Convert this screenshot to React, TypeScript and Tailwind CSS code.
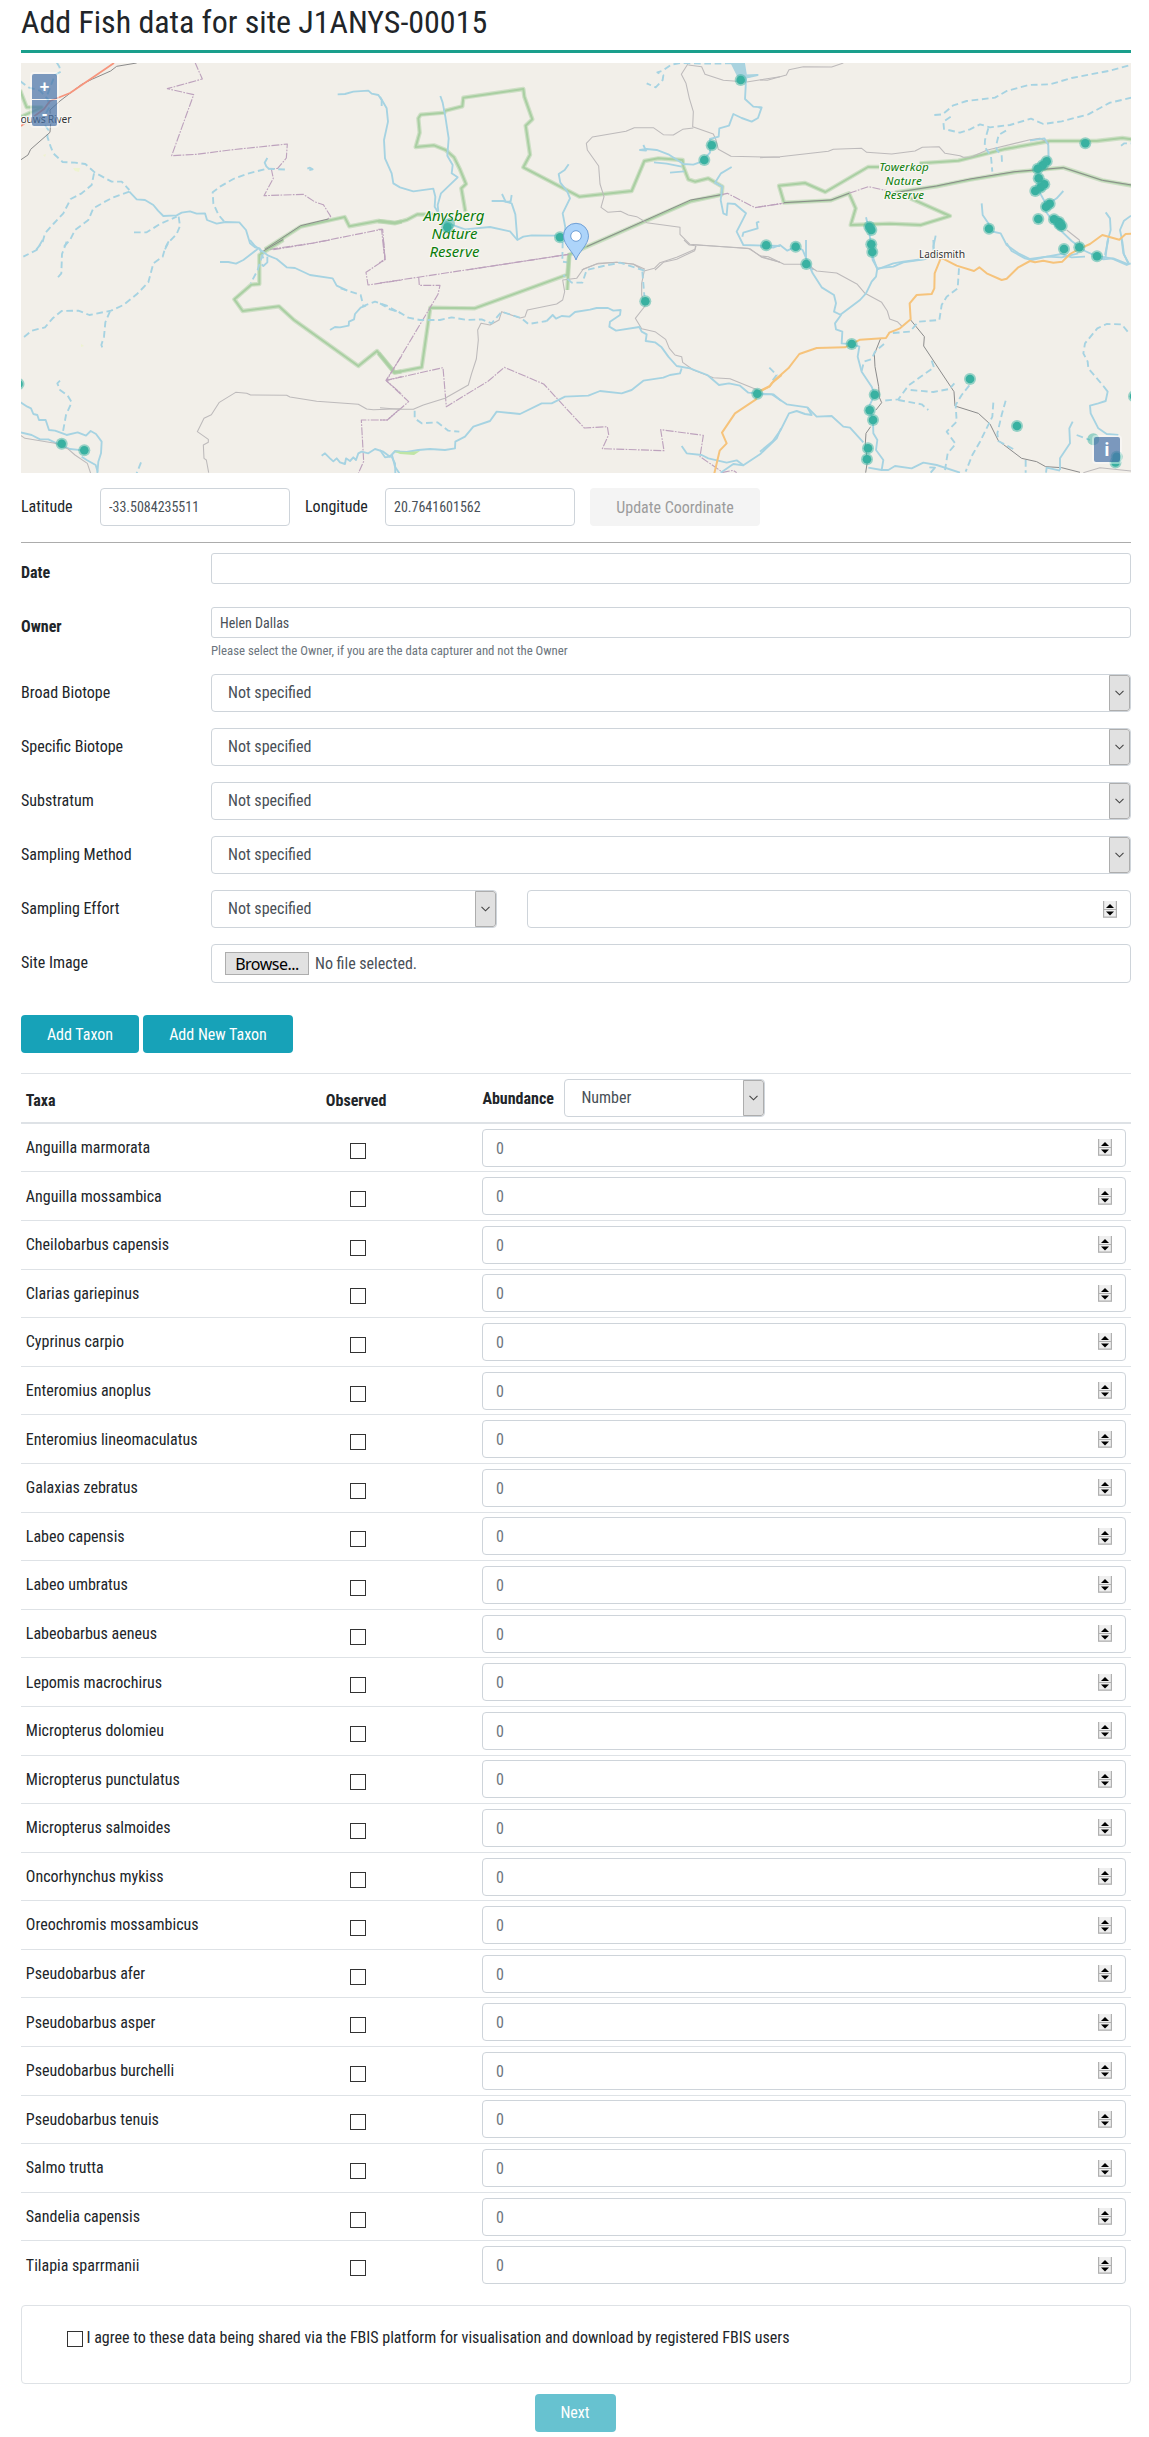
import React from 'react';

const SPECIES = [
  'Anguilla marmorata', 'Anguilla mossambica', 'Cheilobarbus capensis', 'Clarias gariepinus',
  'Cyprinus carpio', 'Enteromius anoplus', 'Enteromius lineomaculatus', 'Galaxias zebratus',
  'Labeo capensis', 'Labeo umbratus', 'Labeobarbus aeneus', 'Lepomis macrochirus',
  'Micropterus dolomieu', 'Micropterus punctulatus', 'Micropterus salmoides', 'Oncorhynchus mykiss',
  'Oreochromis mossambicus', 'Pseudobarbus afer', 'Pseudobarbus asper', 'Pseudobarbus burchelli',
  'Pseudobarbus tenuis', 'Salmo trutta', 'Sandelia capensis', 'Tilapia sparrmanii',
];

type Kind = 'water' | 'dash' | 'park' | 'border' | 'road' | 'orange' | 'rail';

const STYLES: Record<Kind, React.SVGProps<SVGPathElement>> = {
  park: { stroke: '#a9cfa2', strokeWidth: 6 },
  border: { stroke: '#bda2bd', strokeWidth: 3.4, strokeDasharray: '24 4 5 4' },
  road: { stroke: '#bdbabb', strokeWidth: 3.2 },
  rail: { stroke: '#8b8b8b', strokeWidth: 3 },
  water: { stroke: '#a6d3e2', strokeWidth: 5.6 },
  dash: { stroke: '#a6d3e2', strokeWidth: 5.6, strokeDasharray: '20 11' },
  orange: { stroke: '#f6c37b', strokeWidth: 6 },
};

type Tile = { x: number; y: number; lines: [Kind, string][] };

/* Each tile's geometry is held at three times the display scale. */
const TILES: Tile[] = [
  {
    x: 0, y: 0,
    lines: [
      ['park', 'M60 270 L80 322 L125 322 L60 352'],
      ['park', 'M795 748 L902 680 L1034 651 L1048 679 L1134 663 L1185 668 L1205 665'],
      ['rail', 'M795 748 L902 677 L985 657'],
      ['border', 'M585 187 L607 237 L502 266 L581 284 L515 467 L590 463 L690 450 L862 432 L859 474 L833 505 L814 507 L820 535 L792 587 L910 583 L945 606 L970 614 L992 649 L983 658'],
      ['border', 'M810 748 L940 729 L1145 688 L1152 760'],
      ['dash', 'M170 187 L178 200 L182 215 L165 225 L155 250 L140 290 L150 320 L125 360 L145 390 L142 410 L152 440 L160 460 L188 486 L225 488 L256 492 L285 518 L335 545 L365 545 L388 570'],
      ['dash', 'M60 243 L85 262 L120 272 L150 305'],
      ['dash', 'M282 520 L275 555 L245 580 L212 597 L190 640 L160 672 L135 700 L128 725 L108 750'],
      ['dash', 'M388 575 L340 592 L315 605 L280 625 L265 660 L225 690 L210 720 L190 742'],
      ['dash', 'M402 697 L440 697 L480 672 L530 650'],
      ['dash', 'M536 650 L540 678 L530 702 L505 728 L495 748'],
      ['dash', 'M672 664 L655 644 L640 610 L638 577 L660 560 L700 537 L740 522 L800 506 L865 509'],
      ['water', 'M802 474 L794 488 L799 499 L805 505'],
      ['water', 'M922 506 L930 503 L938 508 L928 510'],
      ['water', 'M388 575 L410 598 L435 600 L460 615 L474 632 L490 648 L530 646 L545 638 L570 634 L590 641 L615 640 L621 660 L650 671 L676 666 L718 667 L738 690 L750 730 L765 742 L779 745 L790 775'],
      ['water', 'M1013 283 L1035 282 L1060 275 L1105 272 L1115 281 L1135 285 L1145 300 L1145 318'],
      ['rail', 'M410 189 L350 199 L332 213 L278 237 L245 253 L180 303 L150 330 L152 370 L150 397 L92 448 L84 465 L60 481'],
    ],
  },
  {
    x: 380, y: 50,
    lines: [
      ['park', 'M-5 513 L44 520 L82 509 L112 493 L187 494'],
      ['park', 'M256 484 L244 415 L258 402 L239 356 L222 322 L197 300 L162 286 L107 291 L119 248 L115 205 L122 194 L193 188 L196 182 L247 169 L250 143 L430 117 L433 140 L457 208 L437 227 L450 314 L430 352 L598 440 L755 423 L793 333 L835 325 L908 330 L910 350 L925 388 L945 395 L985 385 L1027 410 L1025 434 L932 454 L620 590 L568 614 L562 720'],
      ['rail', 'M1025 434 L932 450 L620 590'],
      ['border', 'M-5 538 L8 538 L15 628 L0 638'],
      ['border', 'M260 660 L566 613'],
      ['border', 'M1025 434 L1042 430 L1125 473 L1205 460'],
      ['road', 'M925 40 L904 73 L918 100 L928 145 L940 185 L938 230 L1000 252 L1008 270 L1015 298 L1053 319 L1200 322'],
      ['road', 'M940 234 L908 238 L880 255 L850 254 L820 233 L763 233 L738 244 L637 261 L619 280 L622 300 L656 348 L660 402 L672 440 L663 472 L684 487 L722 484 L745 495 L770 500 L800 518 L900 532 L900 553 L930 583 L1000 588 L1110 596 L1145 622 L1200 637'],
      ['road', 'M925 45 L965 50 L975 73 L1030 91 L1100 96 L1200 80'],
      ['road', 'M948 588 L944 602 L890 628 L850 637 L825 660'],
      ['road', 'M605 660 L650 642 L710 637 L760 642 L795 658'],
      ['dash', 'M1055 40 L990 41 L900 39 L874 44 L848 62 L832 67 L850 76 L848 90 L827 112 L800 100'],
      ['water', 'M1052 39 L1092 39 L1098 76 L1133 75 L1098 83 L1097 110 L1095 147 L1120 170 L1145 172 L1134 204 L1115 215 L1085 204 L1060 192 L1047 227 L1018 235 L1016 260 L990 267 L990 308 L965 335 L940 344 L910 342 L865 313 L830 300 L800 297 L780 300 L798 302 L790 285'],
      ['water', 'M822 337 L860 341 L905 350'],
      ['water', 'M870 368 L913 364'],
      ['water', 'M1055 351 L1023 370 L1005 398 L1027 410 L1022 450 L1030 490 L1040 495 L1043 460 L1065 462 L1098 490 L1070 545 L1090 585 L1200 588'],
      ['water', 'M1138 515 L1130 518 L1133 535 L1090 548 L1087 560'],
      ['water', 'M0 140 L20 175 L24 215 L12 270 L15 325 L35 370 L40 400 L60 412 L100 424 L160 416 L166 440 L164 470 L185 505 L205 520 L255 538 L330 531 L390 544 L412 570 L430 560 L455 556 L530 557'],
      ['water', 'M181 138 L188 158 L196 200 L206 265 L202 317 L218 345 L215 370 L233 382 L183 430 L173 465 L175 485'],
      ['water', 'M335 453 L370 453 L395 460 L406 493 L412 568'],
      ['water', 'M366 432 L377 455 L392 454 L395 435'],
      ['water', 'M566 343 L554 360 L536 372 L541 398 L562 425 L570 445 L548 490 L556 532 L552 560'],
      ['dash', 'M548 575 L547 635 L568 638'],
    ],
  },
  {
    x: 760, y: 50,
    lines: [
      ['park', 'M357 351 L324 351 L196 426 L135 399 L57 407 L72 458 L213 451 L267 430 L287 475 L272 525 L390 521 L482 525 L570 498 L447 443'],
      ['park', 'M479 340 L595 332 L735 297 L870 273 L1010 273 L1087 264 L1115 268'],
      ['park', 'M405 427 L530 409 L630 389 L765 366 L910 353 L1027 391 L1115 407'],
      ['rail', 'M72 458 L213 450 L267 430'],
      ['rail', 'M410 427 L530 408 L630 387 L765 365 L910 353 L1027 391 L1115 405'],
      ['border', 'M-5 471 L72 460'],
      ['border', 'M267 430 L325 410 L405 427'],
      ['road', 'M0 90 L22 91 L79 75 L87 59 L130 50 L215 51 L250 39'],
      ['road', 'M0 323 L60 320 L205 304 L220 298 L305 295 L320 307 L395 312 L465 303 L487 292 L537 290 L555 310 L600 317 L610 322 L634 321 L680 301 L810 269 L840 265 L865 278 L865 320'],
      ['road', 'M920 540 L958 570 L960 585'],
      ['dash', 'M523 195 L548 193 L580 166 L620 153 L705 143 L740 123 L805 105 L870 103 L935 84 L1050 62 L1112 45'],
      ['dash', 'M572 200 L550 215 L552 237 L600 248 L630 238 L660 223 L690 232 L750 225 L813 206 L850 222 L905 214 L985 193 L1050 158 L1115 143'],
      ['dash', 'M685 235 L675 270 L674 290 L693 320 L697 365'],
      ['dash', 'M738 242 L716 255 L710 280 L710 300 L725 315 L726 338'],
      ['water', 'M810 272 L853 265 L865 285 L866 325 L835 350 L835 420 L857 460 L858 485 L890 530 L935 573 L975 603 L1030 628 L1060 625 L1105 643'],
      ['water', 'M910 423 L890 445 L875 455'],
      ['water', 'M318 502 L325 530 L334 590 L340 625 L352 658'],
      ['water', 'M665 460 L668 495 L685 520 L690 543 L722 550 L740 585 L775 610 L810 627 L860 620 L905 612 L935 622 L975 620'],
      ['water', 'M1037 487 L1050 505 L1052 540 L1042 575 L1037 620 L1030 628'],
      ['water', 'M1113 497 L1092 512 L1080 540 L1087 575 L1092 613 L1105 640'],
      ['water', 'M527 557 L520 590 L523 618 L492 627 L430 635 L400 640 L352 658'],
      ['water', 'M0 590 L40 593 L60 585 L82 602 L107 590 L128 600 L145 640 L160 660'],
      ['water', 'M-4 173 L4 173'],
      ['dash', 'M1083 287 L1093 280 L1113 280'],
    ],
  },
  {
    x: 0, y: 240,
    lines: [
      ['park', 'M850 0 L778 45 L778 132 L754 134 L703 178 L728 213 L837 199 L882 240 L1075 378 L1131 333 L1184 397 L1204 395'],
      ['rail', 'M850 -2 L790 33'],
      ['border', 'M820 29 L925 12 L990 0'],
      ['border', 'M1150 0 L1155 59 L1098 97 L1104 135 L1205 120'],
      ['border', 'M1205 348 L1158 421 L1205 462'],
      ['border', 'M1158 421 L1205 410'],
      ['border', 'M1198 508 L1162 540 L1084 540 L1091 664 L1075 700'],
      ['road', 'M1200 506 L1120 509 L1100 507 L1075 493 L950 484 L870 471 L860 466 L752 465 L740 460 L707 457 L658 487 L634 524 L612 535 L592 575 L625 598 L625 607 L610 615 L612 655 L619 660 L626 698'],
      ['dash', 'M128 0 L110 30 L70 50'],
      ['dash', 'M200 5 L186 42 L184 100 L168 119'],
      ['dash', 'M506 4 L495 25 L488 50 L460 70 L445 127 L410 163 L370 195 L333 212 L268 225 L235 212 L185 213 L158 235 L135 262 L95 272 L67 295'],
      ['dash', 'M330 214 L316 247 L312 290 L304 315 L308 325'],
      ['dash', 'M180 422 L172 430 L180 450 L203 467 L215 487 L198 525 L188 580'],
      ['dash', 'M423 667 L410 700'],
      ['dash', 'M788 42 L773 90 L752 130'],
      ['dash', 'M1022 145 L1082 165 L1090 198 L1125 185 L1160 197 L1200 220'],
      ['water', 'M750 0 L765 18 L785 32 L805 47 L830 57 L860 82 L885 84 L930 105 L998 115 L1010 137 L1042 152'],
      ['water', 'M660 66 L685 66 L708 71 L730 60 L773 27'],
      ['water', 'M802 50 L802 67 L790 78 L785 73'],
      ['water', 'M1098 197 L1082 203 L1065 222 L1062 238 L1047 245 L1046 257 L1020 262 L1005 261 L990 270'],
      ['water', 'M60 486 L82 500 L93 505 L100 522 L112 525 L117 540 L137 540 L147 570 L165 572 L200 585 L233 577 L258 587 L272 573 L288 582 L305 605 L303 640 L295 665 L292 700'],
      ['water', 'M60 577 L95 585 L120 598 L145 598 L170 610 L210 627 L250 631'],
      ['water', 'M245 650 L260 660 L287 675 L293 695'],
      ['road', 'M60 585 L75 595 L165 610 L203 626 L225 645 L262 670 L272 700'],
      ['water', 'M965 647 L975 640 L990 655 L1000 664 L1010 655 L1020 667 L1035 672 L1038 655 L1050 663 L1060 652 L1068 660 L1075 640 L1085 635 L1105 640 L1125 627 L1150 635 L1170 650 L1185 633 L1200 635'],
      ['water', 'M1175 650 L1185 670 L1186 700'],
    ],
  },
  {
    x: 380, y: 240,
    lines: [
      ['park', 'M568 40 L562 104 L284 205 L151 203 L125 382 L43 398 L-4 340'],
      ['border', 'M0 129 L566 43'],
      ['border', 'M116 111 L118 136 L180 136 L174 163 L20 421 L189 383 L199 500 L325 423 L373 382 L491 432 L613 564 L682 560 L686 584 L667 626 L852 632 L842 569 L970 586 L960 650 L1028 697 L1060 691 L1070 698'],
      ['border', 'M18 421 L86 485 L22 540 L0 540'],
      ['border', 'M10 0 L15 58 L-2 68'],
      ['road', 'M0 503 L55 508 L100 508 L130 495 L195 475 L265 435 L275 400 L289 357 L295 300 L293 270 L303 250 L330 255 L357 240 L365 215 L420 234 L435 230 L442 210 L530 192 L548 180 L554 155 L548 120 L590 115 L610 87 L655 70 L710 67 L760 73 L793 92 L785 130 L785 165 L795 198 L766 235 L785 266 L825 275 L857 298 L868 325 L885 345 L905 350 L908 367 L940 390 L1000 413 L1050 416 L1133 450'],
      ['road', 'M912 0 L928 15 L947 17 L945 28 L890 52 L840 68 L823 85 L795 92'],
      ['road', 'M947 15 L1105 25 L1145 50 L1200 67'],
      ['dash', 'M0 190 L30 208 L55 215 L85 233 L120 240 L180 240 L215 232 L260 240 L305 238 L335 250 L365 215 L425 235 L445 252 L500 243'],
      ['dash', 'M793 92 L720 68 L670 78 L620 90 L607 128 L575 128 L550 105'],
      ['dash', 'M787 95 L790 130 L793 168'],
      ['dash', 'M104 512 L104 535 L125 550 L172 547 L205 572 L238 575'],
      ['dash', 'M1168 383 L1180 395 L1190 405 L1175 425'],
      ['water', 'M500 243 L518 225 L528 236 L545 228 L568 230 L585 216 L630 209 L650 204 L684 204 L700 212 L722 210 L720 225 L690 245 L688 260 L708 272 L778 261 L785 275 L800 283 L797 303 L825 307 L845 322 L865 350 L890 378 L930 385 L982 405 L1017 435 L1047 430 L1080 437 L1105 458 L1180 463 L1203 482'],
      ['water', 'M905 385 L900 400 L870 405 L850 413 L790 422 L755 450 L725 460 L660 453 L625 467 L555 470 L515 490 L485 490 L420 522 L350 515 L330 543 L280 560 L255 590 L226 605 L225 625 L195 630 L150 627 L115 630 L80 636 L45 634 L30 650 L15 652 L0 630'],
      ['water', 'M36 645 L45 680 L58 700'],
      ['water', 'M1203 565 L1190 595 L1140 643 L1090 676 L1070 661 L1040 668 L985 655 L965 645 L920 640 L905 618'],
      ['water', 'M1090 676 L1060 672 L1022 698'],
      ['orange', 'M1205 405 L1175 430 L1168 440 L1133 458 L1128 478 L1065 520 L1026 578 L1040 610 L1019 632 L1003 700'],
    ],
  },
  {
    x: 760, y: 240,
    lines: [
      ['road', 'M0 48 L25 50 L72 73 L140 73 L170 93 L230 99 L292 133 L315 160 L365 187 L382 213 L389 237 L412 245 L427 260'],
      ['rail', 'M452 240 L493 290 L491 318 L582 455 L585 498 L655 520 L690 552 L715 602 L785 655 L830 665 L857 680 L905 683 L960 697'],
      ['rail', 'M362 295 L343 343 L345 380 L356 440 L358 472 L365 488 L348 510'],
      ['rail', 'M332 560 L318 580 L316 610 L322 665 L317 698'],
      ['road', 'M970 698 L1020 683 L1113 693'],
      ['dash', 'M597 85 L593 145 L560 170 L545 195 L538 240 L475 245 L450 275 L385 280'],
      ['dash', 'M372 312 L345 335 L335 357 L312 365 L305 392'],
      ['dash', 'M515 362 L522 382 L485 408 L445 437 L415 478 L370 482'],
      ['dash', 'M452 450 L520 456 L568 447 L583 430'],
      ['dash', 'M415 480 L485 493 L505 510'],
      ['dash', 'M628 436 L605 465 L587 495 L590 545 L560 575 L587 612 L563 640 L555 690'],
      ['dash', 'M700 488 L697 530 L660 605 L637 645 L617 695'],
      ['dash', 'M737 482 L725 525 L712 580 L715 603 L765 630'],
      ['dash', 'M1103 275 L1085 253 L1040 252 L1012 265 L975 310 L970 340 L983 365 L985 385 L1030 438'],
      ['dash', 'M950 585 L990 600'],
      ['dash', 'M797 660 L797 698'],
      ['water', 'M1030 438 L1043 455 L1037 483 L1015 490 L990 497 L992 520 L1015 565 L1040 582 L1075 585'],
      ['water', 'M138 0 L138 55 L158 100 L185 142 L222 165 L228 190 L222 215 L243 225 L225 250 L228 268 L247 275 L245 310 L275 312 L298 320 L293 350 L305 395 L335 440 L344 464 L327 500 L339 540 L340 580 L352 600 L348 630 L370 660 L365 690 L325 683'],
      ['water', 'M334 30 L338 60 L352 85 L348 110 L335 125 L318 160 L300 180 L240 225'],
      ['water', 'M352 85 L400 80 L430 67 L492 58 L522 40 L520 0'],
      ['water', 'M365 690 L385 690 L405 678 L455 685 L490 668 L530 675 L600 698'],
      ['water', 'M508 682 L525 683 L512 698'],
      ['water', 'M0 463 L35 463 L80 493 L142 502 L155 525 L135 522 L110 513 L87 520 L62 570 L38 604 L0 635'],
      ['water', 'M142 502 L170 530 L215 528 L250 560 L270 563 L310 607'],
      ['water', 'M938 545 L928 565 L930 610 L900 655 L900 690'],
      ['water', 'M740 10 L755 33 L795 55 L815 60 L860 50 L905 52 L955 40'],
      ['water', 'M1010 48 L1055 55 L1100 75 L1112 70'],
      ['water', 'M1045 0 L1035 45'],
      ['water', 'M1085 0 L1090 40 L1107 72'],
      ['water', 'M858 698 L860 683 L900 692'],
      ['orange', 'M-5 455 L30 438 L42 422 L85 385 L118 342 L170 324 L255 322 L300 299 L378 294 L388 278 L420 265 L452 238 L449 190 L470 165 L515 162 L523 145 L524 100 L543 53 L590 77 L642 93 L658 82 L680 100 L725 120 L740 116 L775 82 L810 63 L825 67 L850 62 L880 68 L907 65 L930 42 L955 28 L990 12 L1027 -15 L1078 -1 L1097 -18 L1115 -19'],
    ],
  },
];

const SITES: [number, number][] = [
  [740.7, 80], [711.7, 145.3], [704.3, 160], [447.3, 227.3], [560, 237.3], [766.2, 245.3],
  [795.7, 246.7], [806.3, 264], [1085.3, 143.3], [1046.7, 161.3], [1042.7, 165.3], [1037.7, 168.7],
  [1038.7, 178.3], [1044.3, 184.3], [1040.5, 187.5], [1035.3, 191], [1049.7, 203.7], [1046, 206.7],
  [1038.3, 219], [1054, 219.3], [1059, 222], [1059.5, 224.3], [1061.7, 226], [989, 228.7],
  [869.3, 226.7], [871.3, 230], [871.3, 244.3], [872.3, 252], [1064, 249], [1079.3, 247.3],
  [1097, 256.3], [61.7, 443.7], [84.3, 450.3], [18.5, 384], [645.3, 301.3], [757.3, 393.7],
  [851.7, 344], [874.7, 394.7], [869.7, 410.3], [873, 420], [868, 448.3], [867, 459.3],
  [970, 379], [1017, 426], [1134, 396.3], [1115.5, 462.5], [1116.7, 456.7],
];

function MapLabel({ x, y, size, color, width, italic, children }: {
  x: number; y: number; size: number; color: string; width: number; italic?: boolean; children: string;
}) {
  return (
    <text
      x={x} y={y} textAnchor="middle" fontSize={size} fill={color} textLength={width}
      fontStyle={italic ? 'italic' : 'normal'} fontFamily="Noto Sans, sans-serif"
      stroke="#f8f6f2" strokeWidth={2.4} strokeLinejoin="round" paintOrder="stroke"
    >
      {children}
    </text>
  );
}

function SiteMap() {
  return (
    <div className="relative h-[410px] overflow-hidden bg-[#f2efe9]">
      <svg viewBox="21 63 1110 410" className="block h-full w-full" fill="none" strokeLinejoin="round">
        {TILES.map((t, i) => (
          <g key={i} transform={`translate(${t.x} ${t.y}) scale(0.333333)`}>
            {t.lines.map(([kind, d], j) => (
              <g key={j}>
                {kind === 'park' && <path d={d} stroke="#a9cfa2" strokeOpacity={0.5} strokeWidth={13} />}
                <path d={d} {...STYLES[kind]} />
              </g>
            ))}
          </g>
        ))}
        <path d="M730.5 63 H744 L746 75 L757 75 L748 78 L738 78 Z" fill="#aad3df" />
        <path d="M114 63 L70 93 L60 97 L50 101 L44 109 L21 126" stroke="#f6957d" strokeWidth={1.8} />
        <path d="M394 451.5 L408 452 L420 451 L414 455 L400 454 Z" fill="#bfe5a5" />
        <path d="M43 155 l3 -1 l-1 3z M73 168 l7 0 l-1 4 l-4 -1z M81 344 l3 2 l-3 1z" fill="#eef3d0" />
        <MapLabel x={46} y={123} size={10.5} color="#333" width={51}>ouws River</MapLabel>
        <MapLabel x={454} y={221} size={15} color="#0a7d0a" width={61} italic>Anysberg</MapLabel>
        <MapLabel x={454.5} y={239} size={15} color="#0a7d0a" width={46} italic>Nature</MapLabel>
        <MapLabel x={454.5} y={257} size={15} color="#0a7d0a" width={50} italic>Reserve</MapLabel>
        <MapLabel x={904} y={171} size={11.6} color="#0a7d0a" width={49.5} italic>Towerkop</MapLabel>
        <MapLabel x={903.5} y={185} size={11.6} color="#0a7d0a" width={36.5} italic>Nature</MapLabel>
        <MapLabel x={904} y={199.3} size={11.6} color="#0a7d0a" width={40} italic>Reserve</MapLabel>
        <MapLabel x={942} y={257.5} size={10.3} color="#333" width={46}>Ladismith</MapLabel>
        <circle cx={449.5} cy={223.5} r={5.5} fill="#3bb3a3" fillOpacity={0.5} />
        <circle cx={1093.3} cy={439.2} r={6} fill="#3bb3a3" fillOpacity={0.5} />
        {SITES.map(([x, y], i) => (
          <g key={i}>
            <circle cx={x} cy={y} r={6} fill="#3bb3a3" fillOpacity={0.5} />
            <circle cx={x} cy={y} r={4.3} fill="#39b1a1" />
          </g>
        ))}
        <path
          d="M576 260 C573.5 252 563.5 245 563.5 235.8 A12.5 12.5 0 0 1 588.5 235.8 C588.5 245 578.5 252 576 260 Z"
          fill="#add4fa" stroke="#6f9fd6" strokeWidth={1}
        />
        <circle cx={576} cy={236} r={5.3} fill="#fff" stroke="#6f9fd6" strokeWidth={1} />
      </svg>
      <div className="absolute left-[9px] top-[9px] flex flex-col gap-px rounded bg-white/40 p-[2px] font-['Liberation_Sans',sans-serif] text-[16px] leading-none font-bold text-white">
        <button className="h-[25px] w-[25px] rounded-t-[2px] bg-[#003c88]/50 text-[17px]">+</button>
        <button className="h-[26px] w-[25px] rounded-b-[2px] bg-[#003c88]/50 text-[17px]">-</button>
      </div>
      <div className="absolute right-[9px] bottom-[9px] rounded bg-white/40 p-[2px]">
        <button className="block h-[25px] w-[26px] rounded-[2px] bg-[#003c88]/50 text-[19px] leading-none font-bold text-white">i</button>
      </div>
    </div>
  );
}

function SelectBox({ value, className = '' }: { value: string; className?: string }) {
  return (
    <div className={`flex h-[38px] overflow-hidden rounded border border-[#ced4da] text-[#495057] ${className}`}>
      <span className="flex-1 pl-4 leading-[36px]">{value}</span>
      <span className="flex w-[21px] items-center justify-center rounded-r-[3px] border border-[#adadad] bg-[#e1e1e1]">
        <svg width="9" height="6" viewBox="0 0 9 6" fill="none" stroke="#444" strokeWidth="1.1">
          <path d="M0.5 0.8 L4.5 4.8 L8.5 0.8" />
        </svg>
      </span>
    </div>
  );
}

function Spinner() {
  return (
    <svg width="14" height="17" viewBox="0 0 14 17" className="shrink-0">
      <rect width="14" height="17" fill="#efefef" />
      <path d="M0.6 0 V16.3 M13.4 0 V16.3 M0 8.5 H14 M0 16.2 H14" stroke="#b0b0b0" strokeWidth="1.2" fill="none" />
      <path d="M3 7 L7 3 L11 7 Z M3 10.5 L7 14.5 L11 10.5 Z" fill="#000" />
    </svg>
  );
}

function NumberBox({ placeholder = '', className = '' }: { placeholder?: string; className?: string }) {
  return (
    <div className={`flex h-[38px] items-center rounded border border-[#ced4da] pr-[13px] pl-[12.5px] ${className}`}>
      <input className="h-full min-w-0 flex-1 bg-transparent pt-px outline-none placeholder:text-[#6c757d]" placeholder={placeholder} />
      <Spinner />
    </div>
  );
}

function Field({ label, bold, children, className = 'h-[54px]' }: {
  label: string; bold?: boolean; children: React.ReactNode; className?: string;
}) {
  return (
    <div className={`flex ${className}`}>
      <label className={`w-[190px] shrink-0 leading-6 ${bold ? 'pt-[8px] font-bold' : 'pt-[7px]'}`}>{label}</label>
      <div className="flex-1">{children}</div>
    </div>
  );
}

export default function App() {
  return (
    <div className="h-[2437px] bg-white pr-[18px] pl-[21px] font-['Roboto_Condensed',Roboto,sans-serif] text-[16px] leading-6 text-[#212529] [font-stretch:75%]">
      <h1 className="h-[50px] pt-[3px] text-[32px] leading-[38px] tracking-[-0.03px]">Add Fish data for site J1ANYS-00015</h1>
      <div className="mb-[10px] h-[3px] bg-[#1a9f8c]" />
      <SiteMap />

      <div className="mt-[15px] flex h-[38px] items-center">
        <label className="w-[79px]">Latitude</label>
        <input className="h-[38px] w-[190px] rounded border border-[#ced4da] px-2 text-[14px] text-[#495057]" defaultValue="-33.5084235511" />
        <label className="ml-[15px] w-20">Longitude</label>
        <input className="h-[38px] w-[190px] rounded border border-[#ced4da] px-2 text-[14px] text-[#495057]" defaultValue="20.7641601562" />
        <button className="ml-[15px] h-[38px] w-[170px] rounded bg-[#f4f4f4] pt-px text-[#9c9c9c]">Update Coordinate</button>
      </div>
      <div className="mt-4 mb-[10px] h-px bg-[#acacac]" />

      <Field label="Date" bold>
        <input className="block h-[31px] w-full rounded-[3px] border border-[#ced4da] px-2" />
      </Field>
      <Field label="Owner" bold className="h-[67px]">
        <input className="block h-[31px] w-full rounded-[3px] border border-[#ced4da] px-2 text-[14px] text-[#495057]" defaultValue="Helen Dallas" />
        <small className="mt-[3px] block text-[12.8px] leading-[19px] text-[#6c757d]">
          Please select the Owner, if you are the data capturer and not the Owner
        </small>
      </Field>
      <Field label="Broad Biotope"><SelectBox value="Not specified" /></Field>
      <Field label="Specific Biotope"><SelectBox value="Not specified" /></Field>
      <Field label="Substratum"><SelectBox value="Not specified" /></Field>
      <Field label="Sampling Method"><SelectBox value="Not specified" /></Field>
      <Field label="Sampling Effort">
        <div className="flex gap-[30px]">
          <SelectBox value="Not specified" className="w-[286px]" />
          <NumberBox className="flex-1" />
        </div>
      </Field>
      <Field label="Site Image" className="h-[71px]">
        <div className="flex h-[39px] items-center rounded border border-[#ced4da] pl-[13px] text-[#495057]">
          <button className="h-[23px] w-[84px] border border-[#adadad] bg-[#e1e1e1] font-['Noto_Sans',sans-serif] text-[16px] leading-[20px] tracking-[-0.5px] text-black [font-stretch:100%]">Browse...</button>
          <span className="ml-[6px] pt-px">No file selected.</span>
        </div>
      </Field>

      <div className="mb-5 flex gap-1 text-white">
        <button className="h-[38px] w-[118px] rounded bg-[#17a2b8] pt-px">Add Taxon</button>
        <button className="h-[38px] w-[150px] rounded bg-[#17a2b8] pt-px">Add New Taxon</button>
      </div>

      <div className="flex h-[50.8px] border-t border-b-2 border-[#dee2e6] px-[4.8px] font-bold">
        <div className="w-[300px] pt-[15px]">Taxa</div>
        <div className="w-[156.6px] pt-[15px]">Observed</div>
        <div className="flex items-start pt-[5px]">
          <span className="w-[82px] pt-[8px] leading-6">Abundance</span>
          <SelectBox value="Number" className="w-[201px] font-normal" />
        </div>
      </div>
      {SPECIES.map((name, i) => (
        <div
          key={name}
          className={`flex px-[4.8px] ${i === 0 ? 'h-[47.6px] pt-[4.8px]' : 'h-[48.6px] border-t border-[#dee2e6] pt-[4.8px]'}`}
        >
          <div className="w-[324.2px] pt-[7.4px]">{name}</div>
          <div className="w-[132.4px] pt-[14px]">
            <span className="block h-4 w-[16px] border border-[#333]" />
          </div>
          <NumberBox placeholder="0" className="flex-1" />
        </div>
      ))}

      <div className="mt-[15.8px] flex h-[79px] items-start rounded border border-[#dee2e6] pt-[20px] pl-[45px]">
        <span className="mt-[5px] mr-[3.5px] block h-4 w-4 border border-[#333]" />
        <span>I agree to these data being shared via the FBIS platform for visualisation and download by registered FBIS users</span>
      </div>
      <div className="mt-[10px] flex justify-center pr-[2px]">
        <button className="h-[38px] w-[81px] rounded bg-[#17a2b8] pt-px text-white opacity-65">Next</button>
      </div>
    </div>
  );
}
